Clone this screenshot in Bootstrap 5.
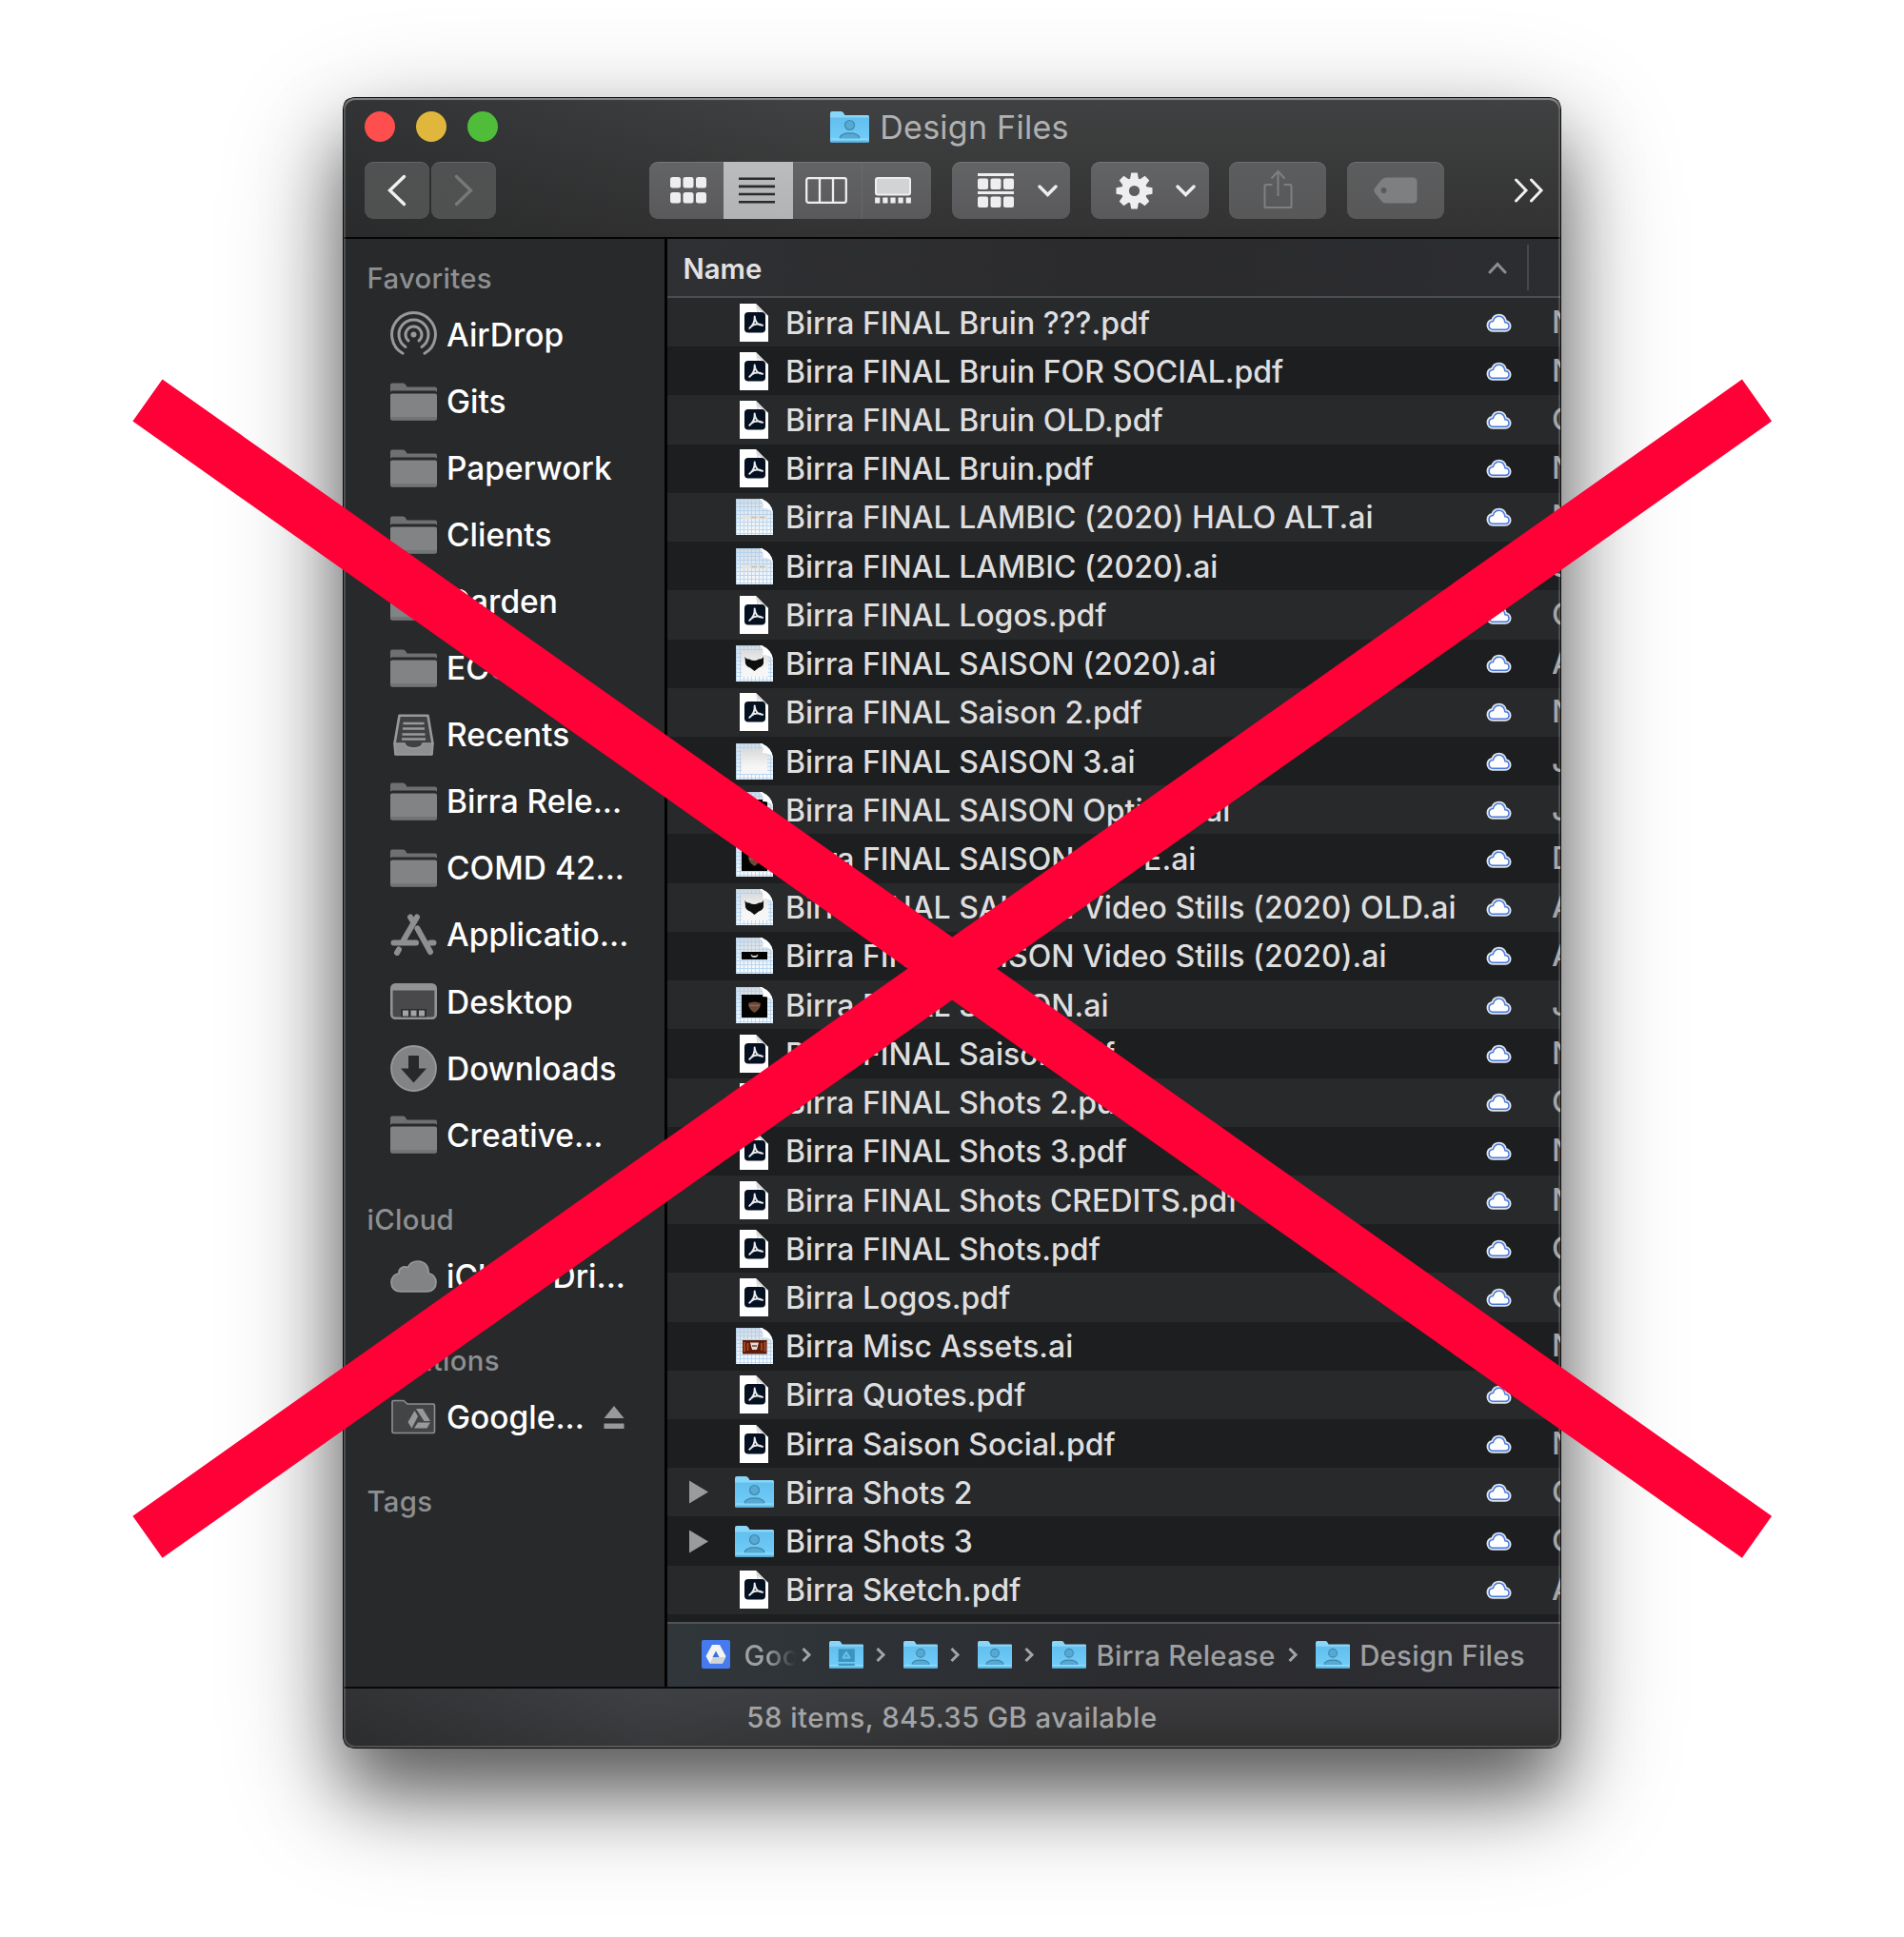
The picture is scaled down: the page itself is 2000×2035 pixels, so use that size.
<!DOCTYPE html>
<html lang="en">
<head>
<meta charset="utf-8">
<meta name="viewport" content="width=device-width, initial-scale=1">
<title>Design Files</title>
<link href="https://cdn.jsdelivr.net/npm/bootstrap@5.3.0/dist/css/bootstrap.min.css" rel="stylesheet">
<style>
body{width:2000px;height:2035px;background:#fff;font-family:Inter,"Liberation Sans",sans-serif;line-height:1;overflow:hidden}
svg{display:block;flex:none}
.stage{width:2000px;height:2035px;padding:103px 0 0 361px}
.finder{width:1278px;height:1733px;border-radius:12px;background:#28292b;
  box-shadow:0 0 0 1px #0a0a0a,0 46px 76px rgba(0,0,0,.5),0 40px 130px rgba(0,0,0,.32)}
/* light inner rim of the window */
.rim{inset:0;border-radius:12px;pointer-events:none;box-shadow:inset 0 2px 1px rgba(255,255,255,.27),inset 0 0 0 2px rgba(255,255,255,.17)}
.toolbar{height:148px;border-bottom:2px solid #050505;
  background:linear-gradient(90deg,rgba(30,32,34,.42),rgba(30,32,34,0) 38%),linear-gradient(#404142,#323232)}
.titlerow{display:grid;grid-template-columns:1fr auto 1fr;height:67px;padding:0 27px 7px 22px}
.light{width:32px;height:32px;border-radius:50%}
.wintitle{font-size:34px;letter-spacing:.25px;color:#b0b1b2;gap:11px}
.wintitle span,.sectlabel span,.place span,.pathbar span{padding-top:1px}
.toolrow{padding-left:22px;height:60px}
.tool{height:60px;border-radius:9px;background:linear-gradient(#636465,#59595b);box-shadow:inset 0 1px 0 rgba(255,255,255,.12);color:#eeeef0}
.tool.dim{background:linear-gradient(#5c5d5e,#585859);color:#7e7f81}
.tool.nav1{background:linear-gradient(#505152,#4f5150);width:67.5px}
.seg{height:60px}
.seg.on{background:linear-gradient(#bbbcbe,#b2b3b5);color:#2a2b2d}
.sidebar{width:337px;background:#28292b;padding-top:16px}
.split{width:3px;background:#020202}
.sectlabel{height:50px;padding-left:24.5px;font-size:29.3px;letter-spacing:.3px;font-weight:500;color:#8e8f91}
.gapabove{margin-top:28px}
.place{height:70.08px;padding-left:49px;gap:10px;font-size:33.5px;font-weight:500;color:#fff;white-space:nowrap}
.place svg{margin-top:-1px}
.colhead{height:62px;padding-left:16.5px;border-bottom:2px solid #4c4d50;font-size:29.3px;font-weight:600;color:#e2e2e3;
  background:linear-gradient(90deg,#2f3033,#2b2b2d 50%,#2c2d31)}
.coldiv{width:2px;height:48px;background:#47484a;margin-left:21px}
.filelist{height:1391px;background:#1d1e20;overflow:hidden}
.filerow{height:51.22px;padding-left:23px;font-size:32px;font-weight:450;letter-spacing:.02px;color:#dededf;white-space:nowrap;overflow:hidden}
.filerow:nth-child(odd){background:#28292b}
.disc{width:20px;margin-right:17px}
.thumb{width:62px}
.fname{margin-left:2px;padding-top:2px}
.cloudcol{margin-left:auto;margin-right:42px}
.datecol{width:9px;overflow:hidden;color:#a5a5a6;font-size:32px;line-height:48px;letter-spacing:0}
.pathbar{height:68px;border-top:2px solid #505255;padding-left:36px;font-size:29.3px;letter-spacing:.3px;color:#9fa0a2;white-space:nowrap;font-weight:450;
  background:linear-gradient(90deg,#30373b,#2b2c30 50%,#2d2d32)}
.pathbar>svg{margin-top:-2px}
.fadeword{width:54px;overflow:hidden;line-height:36px;-webkit-mask-image:linear-gradient(90deg,#000 45%,transparent);mask-image:linear-gradient(90deg,#000 45%,transparent)}
.crumb{margin:0 18px 0 12px}
.statusbar{height:64px;border-top:2px solid #080808;font-size:29.3px;font-weight:450;letter-spacing:.5px;color:#a3a4a5;
  background:linear-gradient(90deg,rgba(40,41,43,.5),rgba(66,72,76,.35) 25%,rgba(50,50,52,0) 55%),linear-gradient(#3c3c3f,#303031)}
.cross{left:0;top:0}
</style>
<script src="https://cdn.jsdelivr.net/npm/bootstrap@5.3.0/dist/js/bootstrap.bundle.min.js"></script>
</head>
<body>
<svg width="0" height="0" class="position-absolute">
  <defs>
    <linearGradient id="blueG" x1="0" y1="0" x2="0" y2="1"><stop offset="0" stop-color="#62bfee"/><stop offset="1" stop-color="#72cdf8"/></linearGradient>
    <linearGradient id="paperG" x1="0" y1="0" x2="0" y2="1"><stop offset="0" stop-color="#dcdcdc"/><stop offset=".7" stop-color="#f6f6f6"/></linearGradient>
    <linearGradient id="gridG" x1="0" y1="0" x2="0" y2="1"><stop offset="0" stop-color="#d3dce4"/><stop offset="1" stop-color="#fbfdff"/></linearGradient>
    <pattern id="gridP" width="4" height="4" patternUnits="userSpaceOnUse"><path d="M0 .5H4M.5 0V4" stroke="#a9cdec" stroke-width="1" opacity=".75"/></pattern>
    <symbol id="bluefolder" viewBox="0 0 41 33">
      <path d="M0 2Q0 0 2 0H11.5Q13 0 14 1.500L15.500 4H39.500Q41 4 41 5.500V31Q41 32.500 39.500 32.500H1.500Q0 32.500 0 31Z" fill="#8ad6f8"/>
      <path d="M0 6.500H41V31Q41 32.500 39.500 32.500H1.500Q0 32.500 0 31Z" fill="url(#blueG)"/>
      <path d="M1 29H40" stroke="#9be0fb" stroke-width="1"/><path d="M.5 32H40.500" stroke="#4b9cc7" stroke-width="1"/>
    </symbol>
    <symbol id="userfolder" viewBox="0 0 41 33">
      <use href="#bluefolder" width="41" height="33"/>
      <circle cx="20.500" cy="14.500" r="5" fill="#56a9d3" stroke="#4187ac" stroke-width="1.200"/>
      <path d="M10 28.500C10 24.500 15 22.700 20.500 22.700S31 24.500 31 28.500Z" fill="#56a9d3"/><path d="M10 28C11 24 15.500 22.900 20.500 22.900S30 24 31 28" fill="none" stroke="#4187ac" stroke-width="1.200"/>
    </symbol>
    <symbol id="drivefolder" viewBox="0 0 41 33">
      <use href="#bluefolder" width="41" height="33"/>
      <path d="M11 9.500H30.500V25H11Z" fill="#3b93c0"/><path d="M11 27H30.500V29.500H11Z" fill="#3b93c0"/>
      <path d="M20.500 13.500L16.500 20H24.500Z" fill="none" stroke="#66bfe6" stroke-width="2.400" stroke-linejoin="round"/>
    </symbol>
    <symbol id="grayfolder" viewBox="0 0 49 40">
      <path d="M0 9V2.500Q0 .5 2 .5H13.500Q15 .5 16 2L17.500 4.500H47Q49 4.500 49 6.500V10Q48.500 8.500 47 8.500H2Q.5 8.500 0 10Z" fill="#6f7072"/>
      <path d="M0 13Q0 11.500 2 11.500H47Q49 11.500 49 13.500V37Q49 39.500 47 39.500H2Q0 39.500 0 37Z" fill="#828385"/>
      <path d="M0 36H49V37Q49 39.500 47 39.500H2Q0 39.500 0 37Z" fill="#737476"/>
    </symbol>
    <symbol id="pdf" viewBox="0 0 30 40">
      <path d="M0 0H17L30 13V40H0Z" fill="#fff"/>
      <path d="M17 0L30 13L18.500 9Z" fill="#d9d9d9"/><path d="M18.500 6L30 13L24 14Z" fill="#fff"/>
      <rect x="5" y="9" width="22" height="21.500" rx="4" fill="#051120"/>
      <path d="M15.700 13.500C16 18 14.500 22.500 10.300 25.800M15.700 14C16.200 19 19 22.500 24 22.800M12 24C15 21.500 19.500 20.900 24 22.800" fill="none" stroke="#e7e9ec" stroke-width="2" stroke-linecap="round"/>
    </symbol>
    <symbol id="aipage" viewBox="0 0 39 38">
      <path d="M0 0H27Q38 5 39 15V38H0Z" fill="url(#gridG)"/><path d="M0 0H27Q38 5 39 15V38H0Z" fill="url(#gridP)"/>
    </symbol>
    <symbol id="aicurl" viewBox="0 0 39 38"><path d="M25 0Q30 4 28 10Q36 10 39 15Q38 5 27 0Z" fill="#fff"/></symbol>
    <symbol id="ai-lambic" viewBox="0 0 39 38"><use href="#aipage" width="39" height="38"/>
      <path d="M6 19.500H33" stroke="#e4e4df" stroke-width="3.500"/><path d="M16 19.500H31" stroke="#bdbdb9" stroke-width="1.500" stroke-dasharray="6 2.500"/><use href="#aicurl" width="39" height="38"/></symbol>
    <symbol id="ai-beard" viewBox="0 0 39 38"><use href="#aipage" width="39" height="38"/>
      <rect x="6" y="5" width="28" height="28" fill="url(#paperG)"/>
      <path d="M9.500 12Q11 15 14 14.500Q19.500 17.500 24 14.500Q27.500 15 29 12V19Q28 22 24 23.500L19.500 27L15 23.500Q11 22 10 19Z" fill="#0d0e10"/><use href="#aicurl" width="39" height="38"/></symbol>
    <symbol id="ai-blank" viewBox="0 0 39 38"><use href="#aipage" width="39" height="38"/>
      <rect x="6" y="7" width="27" height="25" fill="url(#paperG)"/><use href="#aicurl" width="39" height="38"/></symbol>
    <symbol id="ai-dark" viewBox="0 0 39 38"><use href="#aipage" width="39" height="38"/>
      <rect x="6" y="8" width="27" height="24" fill="#020202"/><path d="M13 17Q19.500 14 26 17Q26 23 19.500 27Q13 23 13 17Z" fill="#6a4a36"/><path d="M14 19.500H25" stroke="#8a6a54" stroke-width="1.500"/><use href="#aicurl" width="39" height="38"/></symbol>
    <symbol id="ai-strip" viewBox="0 0 39 38"><use href="#aipage" width="39" height="38"/>
      <rect x="6" y="15" width="27" height="8" fill="#030303"/><path d="M15.500 17.500L18 19H21L23.500 17.500Q23 21 19.500 21Q16 21 15.500 17.500Z" fill="#d5d5d5"/><use href="#aicurl" width="39" height="38"/></symbol>
    <symbol id="ai-misc" viewBox="0 0 39 38"><use href="#aipage" width="39" height="38"/>
      <rect x="7" y="13" width="25.500" height="14.500" fill="#5b1c0c"/><path d="M9 15V25M12.500 16V24M27 16V24M30.500 15V25" stroke="#b04a22" stroke-width="1.800"/><path d="M15 15.500H24L22 23H17Z" fill="#e3ddd9"/><path d="M17 19H22" stroke="#6c2a1b" stroke-width="1.300"/><use href="#aicurl" width="39" height="38"/></symbol>
    <symbol id="cloud" viewBox="0 0 27 20">
      <path d="M7 18.200H20.200C23.300 18.200 25 16 25 13.500C25 11 23.200 9 20.600 8.800C19.800 4.500 17 2.200 13.500 2.200C10.300 2.200 7.800 4 6.700 7.500C3.800 8 2 10 2 12.800C2 16 4.200 18.200 7 18.200Z" fill="#fff" stroke="#dfe4ec" stroke-width="3"/>
      <path d="M7 17.200H20.200C22.600 17.200 24 15.500 24 13.500C24 11.400 22.500 9.800 19.900 9.700C19.200 5.300 16.700 3.300 13.500 3.300C10.500 3.300 8.300 5.200 7.500 8.400C4.600 8.700 3.100 10.400 3.100 12.800C3.100 15.500 4.900 17.200 7 17.200Z" fill="#fff" stroke="#4679dd" stroke-width="1.500"/>
    </symbol>
    <symbol id="chev" viewBox="0 0 12 17"><path d="M2.500 2L9 8.500L2.500 15" fill="none" stroke="#a3a4a6" stroke-width="3"/></symbol>
  </defs>
</svg>

<div class="stage position-relative">
  <main class="finder d-flex flex-column position-relative overflow-visible">
    <div class="rounded-3 overflow-hidden d-flex flex-column h-100">
    <header class="toolbar">
      <div class="titlerow align-items-center">
        <div class="d-flex" style="gap:22px">
          <span class="light" style="background:#fe4e4d"></span><span class="light" style="background:#e0b73c"></span><span class="light" style="background:#4fbc3a"></span>
        </div>
        <div class="wintitle d-flex align-items-center"><svg width="41" height="33"><use href="#userfolder"/></svg><span>Design Files</span></div>
        <span></span>
      </div>
      <div class="toolrow d-flex">
        <div class="tool nav1 d-flex align-items-center justify-content-center"><svg width="22" height="34" viewBox="0 0 22 34"><path d="M18.500 2.500L3.500 17L18.500 31.500" fill="none" stroke="#f0f0f0" stroke-width="3.400" stroke-linecap="round"/></svg></div>
        <div class="tool nav1 d-flex align-items-center justify-content-center" style="margin-left:2.500px"><svg width="22" height="34" viewBox="0 0 22 34"><path d="M3.500 2.500L18.500 17L3.500 31.500" fill="none" stroke="#777879" stroke-width="3.400" stroke-linecap="round"/></svg></div>
        <div class="tool d-flex overflow-hidden" style="margin-left:161.500px;width:296px">
          <div class="seg d-flex align-items-center justify-content-center" style="width:78px;padding-left:3px"><svg width="38" height="28" viewBox="0 0 38 28" fill="currentColor"><rect width="11" height="11.500" rx="2.500"/><rect x="13.500" width="11" height="11.500" rx="2.500"/><rect x="27" width="11" height="11.500" rx="2.500"/><rect y="16" width="11" height="11.500" rx="2.500"/><rect x="13.500" y="16" width="11" height="11.500" rx="2.500"/><rect x="27" y="16" width="11" height="11.500" rx="2.500"/></svg></div>
          <div class="seg on d-flex align-items-center justify-content-center" style="width:72.500px;padding-right:2px"><svg width="38" height="28" viewBox="0 0 38 28"><path d="M0 1.800H38M0 9.900H38M0 18H38M0 26.200H38" stroke="currentColor" stroke-width="2.600"/></svg></div>
          <div class="seg d-flex align-items-center justify-content-center" style="width:72px;padding-right:1px"><svg width="44" height="28" viewBox="0 0 44 28"><g fill="none" stroke="currentColor" stroke-width="2.300"><rect x="1.200" y="1.200" width="41.600" height="25.600" rx="2"/><path d="M15 1V27M29 1V27"/></g></svg></div>
          <div class="seg d-flex align-items-center justify-content-center border-start border-secondary" style="width:73.500px;padding-right:8px;--bs-border-opacity:.5"><svg width="38" height="28" viewBox="0 0 38 28"><rect x="1" y="1" width="36" height="17.500" rx="2" fill="#d2d3d5" stroke="currentColor" stroke-width="2"/><path d="M2.700 21.500V27.500M10.900 21.500V27.500M19 21.500V27.500M27.100 21.500V27.500M35.300 21.500V27.500" stroke="currentColor" stroke-width="5.200"/></svg></div>
        </div>
        <div class="tool d-flex align-items-center" style="margin-left:22px;width:123.500px;padding-left:26.500px;gap:25px">
          <svg width="38" height="36" viewBox="0 0 38 36" fill="currentColor"><path d="M0 0H38V3H0ZM0 19H38V22H0Z"/><rect y="5.500" width="11" height="11.500" rx="2"/><rect x="13.500" y="5.500" width="11" height="11.500" rx="2"/><rect x="27" y="5.500" width="11" height="11.500" rx="2"/><rect y="24.500" width="11" height="11.500" rx="2"/><rect x="13.500" y="24.500" width="11" height="11.500" rx="2"/><rect x="27" y="24.500" width="11" height="11.500" rx="2"/></svg>
          <svg width="21" height="13" viewBox="0 0 21 13"><path d="M2 2L10.500 10.500L19 2" fill="none" stroke="currentColor" stroke-width="3.400" stroke-linecap="round"/></svg>
        </div>
        <div class="tool d-flex align-items-center" style="margin-left:22px;width:124px;padding-left:26px;gap:24.500px">
          <svg width="39" height="39" viewBox="-19.500 -19.500 39 39"><g fill="currentColor"><path fill-rule="evenodd" d="M0-13.500A13.500 13.500 0 1 1 0 13.500A13.500 13.500 0 1 1 0-13.500ZM0-5.600A5.600 5.600 0 1 0 0 5.600A5.600 5.600 0 1 0 0-5.600Z"/><g id="teeth"><path id="tooth" d="M-4.500-12L-3.300-19H3.300L4.500-12Z"/><use href="#tooth" transform="rotate(45)"/><use href="#tooth" transform="rotate(90)"/><use href="#tooth" transform="rotate(135)"/></g><use href="#teeth" transform="rotate(180)"/></g></svg>
          <svg width="21" height="13" viewBox="0 0 21 13"><path d="M2 2L10.500 10.500L19 2" fill="none" stroke="currentColor" stroke-width="3.400" stroke-linecap="round"/></svg>
        </div>
        <div class="tool dim d-flex justify-content-center" style="margin-left:21.500px;width:102px;padding-top:8px"><svg width="31" height="42" viewBox="0 0 31 42"><path d="M9.500 16H3Q1.500 16 1.500 17.500V38.500Q1.500 40 3 40H28Q29.500 40 29.500 38.500V17.500Q29.500 16 28 16H21.500M15.500 28V3M8.500 9.500L15.500 2L22.500 9.500" fill="none" stroke="currentColor" stroke-width="2.100"/></svg></div>
        <div class="tool dim d-flex align-items-center justify-content-center" style="margin-left:21.500px;width:102.500px"><svg width="46" height="28" viewBox="0 0 46 28"><path fill="currentColor" fill-rule="evenodd" d="M13 .5H41Q45.500 .5 45.500 5V23Q45.500 27.500 41 27.500H13Q10 27.500 8 25L1.500 17Q-.8 14 1.500 11L8 3Q10 .5 13 .5ZM10.500 11A3 3 0 1 0 10.500 17A3 3 0 1 0 10.500 11Z"/></svg></div>
        <svg class="align-self-center" style="margin-left:73px" width="32" height="26" viewBox="0 0 32 26"><path d="M2.500 2L13 13L2.500 24M18.500 2L29 13L18.500 24" fill="none" stroke="#f0f0f0" stroke-width="3" stroke-linecap="round"/></svg>
      </div>
    </header>

    <div class="d-flex flex-grow-1">
      <aside class="sidebar flex-shrink-0">
        <div class="sectlabel d-flex align-items-center"><span>Favorites</span></div>
        <div class="place d-flex align-items-center"><svg width="49" height="49" viewBox="-24.500 -24.500 49 49"><g fill="none" stroke="#98999b" stroke-width="3" stroke-linecap="round"><circle r="3" fill="#98999b" stroke="none"/><path d="M-5.500 6.500A8.500 8.500 0 1 1 5.500 6.500"/><path d="M-8.500 13A15.500 15.500 0 1 1 8.500 13"/><path d="M-11.500 19.800A22.900 22.900 0 1 1 11.500 19.800"/></g></svg><span>AirDrop</span></div>
        <div class="place d-flex align-items-center"><svg width="49" height="40"><use href="#grayfolder"/></svg><span>Gits</span></div>
        <div class="place d-flex align-items-center"><svg width="49" height="40"><use href="#grayfolder"/></svg><span>Paperwork</span></div>
        <div class="place d-flex align-items-center"><svg width="49" height="40"><use href="#grayfolder"/></svg><span>Clients</span></div>
        <div class="place d-flex align-items-center"><svg width="49" height="40"><use href="#grayfolder"/></svg><span>Garden</span></div>
        <div class="place d-flex align-items-center"><svg width="49" height="40"><use href="#grayfolder"/></svg><span>ECO</span></div>
        <div class="place d-flex align-items-center"><svg width="49" height="44" viewBox="0 0 49 44"><path d="M9.500 1.800H39.500L44.500 31L43.500 42.500H5.500L4.500 31Z" fill="#404143" stroke="#98999b" stroke-width="2.600" stroke-linejoin="round"/><path d="M4.500 31H15Q16 36 24.500 36T34 31H44.500L43.500 42.500H5.500Z" fill="#8e8f91" stroke="#98999b" stroke-width="1.500"/><path d="M13.500 10H35.500M13 15.500H36M12.500 21.500H36.500M12 26.500H37" stroke="#98999b" stroke-width="2.400"/></svg><span>Recents</span></div>
        <div class="place d-flex align-items-center"><svg width="49" height="40"><use href="#grayfolder"/></svg><span>Birra Rele...</span></div>
        <div class="place d-flex align-items-center"><svg width="49" height="40"><use href="#grayfolder"/></svg><span>COMD 42...</span></div>
        <div class="place d-flex align-items-center"><svg width="49" height="44" viewBox="0 0 49 44"><g fill="none" stroke="#8e8f91" stroke-width="6" stroke-linecap="round"><path d="M3.500 30.500H27M42 30.500H45.500M28 3.500L13.500 28.500M9 37.500L7 41"/><path d="M21 3.500L24 8.500M28.500 15.500L42 40"/></g></svg><span>Applicatio...</span></div>
        <div class="place d-flex align-items-center"><svg width="49" height="38" viewBox="0 0 49 38"><rect x="1.300" y="1.300" width="46.400" height="35.400" rx="4" fill="#49494b" stroke="#929395" stroke-width="2.600"/><path d="M1.300 7.500V5Q1.300 1.300 5 1.300H44Q47.700 1.300 47.700 5V7.500Z" fill="#929395"/><path d="M11 27H38V35.500H11Z" fill="#2c2d2e"/><path d="M13 28.500H19V34.500H13ZM21.500 28.500H27.500V34.500H21.500ZM30 28.500H36V34.500H30Z" fill="#a2a3a5"/></svg><span>Desktop</span></div>
        <div class="place d-flex align-items-center"><svg width="49" height="49" viewBox="0 0 49 49"><circle cx="24.500" cy="24.500" r="23.500" fill="#828385" stroke="#98999b" stroke-width="1.800"/><path d="M19 11H30V24.500H38L24.500 39.500L11 24.500H19Z" fill="#28292b"/></svg><span>Downloads</span></div>
        <div class="place d-flex align-items-center"><svg width="49" height="40"><use href="#grayfolder"/></svg><span>Creative...</span></div>

        <div class="sectlabel gapabove d-flex align-items-center"><span>iCloud</span></div>
        <div class="place d-flex align-items-center"><svg width="49" height="34" viewBox="0 0 49 34"><path d="M10.500 33H38.500C44 33 48 29 48 23.500C48 18 44.500 14.500 40 13.500C40.500 6 35.500 1 29 1C23.500 1 20 3.800 18.500 7.500C13.500 5.500 8.500 8.500 9 13.800C4 14.500 1 18.500 1 23.500C1 29 5 33 10.500 33Z" fill="#828385" stroke="#98999b" stroke-width="1.700"/></svg><span>iCloud Dri...</span></div>

        <div class="sectlabel gapabove d-flex align-items-center"><span>Locations</span></div>
        <div class="place d-flex align-items-center"><svg width="49" height="37" viewBox="0 0 49 37"><path d="M2 3Q2 1.500 3.500 1.500H14L18 5H45Q46.500 5 46.500 6.500V34Q46.500 35.500 45 35.500H3.500Q2 35.500 2 34Z" fill="#434446" stroke="#8e8f91" stroke-width="1.600"/><path d="M27 10H34L42 23H35.500ZM25.500 12L29 18L22.500 30.500L18.500 24ZM29 24.500H42L38.500 30.500H25Z" fill="#98999b"/></svg><span>Google...</span><svg style="margin-left:10px" width="22" height="24" viewBox="0 0 22 24"><path d="M11 0L21.500 13H.5ZM.5 18.500H21.500V24H.5Z" fill="#98999b"/></svg></div>

        <div class="sectlabel gapabove d-flex align-items-center"><span>Tags</span></div>
      </aside>
      <div class="split flex-shrink-0"></div>
      <section class="flex-grow-1 d-flex flex-column overflow-hidden">
        <div class="colhead d-flex align-items-center"><span class="pt-1">Name</span>
          <svg class="ms-auto" width="20" height="13" viewBox="0 0 20 13"><path d="M2 11L10 2.500L18 11" fill="none" stroke="#8c8d8f" stroke-width="3" stroke-linecap="round"/></svg>
          <span class="coldiv"></span><span style="width:33px"></span></div>
        <div class="filelist" id="files"></div>
        <div class="pathbar d-flex align-items-center">
          <svg width="30" height="30" viewBox="0 0 30 30"><rect width="30" height="30" rx="2" fill="#457bee"/><path d="M11 5H19L25.500 17L22 24.500H8.500L4.500 17Z" fill="#f4f4f4"/><path d="M8.500 24.500L12 18H25.200L22 24.500Z" fill="#d2d4d6"/><path d="M15 11.500L18.500 18H11.500Z" fill="#3d6fdc"/></svg>
          <span class="fadeword" style="margin-left:14.500px">Google</span>
          <svg class="crumb" style="margin-left:5.500px" width="12" height="17"><use href="#chev"/></svg>
          <svg width="36" height="29"><use href="#drivefolder"/></svg>
          <svg class="crumb" width="12" height="17"><use href="#chev"/></svg>
          <svg width="36" height="29"><use href="#userfolder"/></svg>
          <svg class="crumb" width="12" height="17"><use href="#chev"/></svg>
          <svg width="36" height="29"><use href="#userfolder"/></svg>
          <svg class="crumb" width="12" height="17"><use href="#chev"/></svg>
          <svg width="36" height="29"><use href="#userfolder"/></svg>
          <span style="margin-left:10.500px">Birra Release</span>
          <svg class="crumb" width="12" height="17"><use href="#chev"/></svg>
          <svg width="36" height="29"><use href="#userfolder"/></svg>
          <span style="margin-left:10.500px">Design Files</span>
        </div>
      </section>
    </div>
    <footer class="statusbar d-flex align-items-center justify-content-center">58 items, 845.35 GB available</footer>
    </div>
    <div class="rim position-absolute"></div>
  </main>
  <svg class="cross position-absolute" width="2000" height="2035" viewBox="0 0 2000 2035"><path d="M155 420.500L1845.500 1614.700M1845.500 420.500L155 1614.700" stroke="#ff0037" stroke-width="54"/></svg>
</div>
<script>
// [name, icon, first letter of the date column]
const files = [
  ["Birra FINAL Bruin ???.pdf","pdf","N"],
  ["Birra FINAL Bruin FOR SOCIAL.pdf","pdf","N"],
  ["Birra FINAL Bruin OLD.pdf","pdf","O"],
  ["Birra FINAL Bruin.pdf","pdf","N"],
  ["Birra FINAL LAMBIC (2020) HALO ALT.ai","ai-lambic","N"],
  ["Birra FINAL LAMBIC (2020).ai","ai-lambic","J"],
  ["Birra FINAL Logos.pdf","pdf","O"],
  ["Birra FINAL SAISON (2020).ai","ai-beard","A"],
  ["Birra FINAL Saison 2.pdf","pdf","N"],
  ["Birra FINAL SAISON 3.ai","ai-blank","J"],
  ["Birra FINAL SAISON Options.ai","ai-dark","J"],
  ["Birra FINAL SAISON WIDE.ai","ai-dark","D"],
  ["Birra FINAL SAISON Video Stills (2020) OLD.ai","ai-beard","A"],
  ["Birra FINAL SAISON Video Stills (2020).ai","ai-strip","A"],
  ["Birra FINAL SAISON.ai","ai-dark","J"],
  ["Birra FINAL Saison.pdf","pdf","N"],
  ["Birra FINAL Shots 2.pdf","pdf","O"],
  ["Birra FINAL Shots 3.pdf","pdf","N"],
  ["Birra FINAL Shots CREDITS.pdf","pdf","N"],
  ["Birra FINAL Shots.pdf","pdf","O"],
  ["Birra Logos.pdf","pdf","O"],
  ["Birra Misc Assets.ai","ai-misc","N"],
  ["Birra Quotes.pdf","pdf","N"],
  ["Birra Saison Social.pdf","pdf","N"],
  ["Birra Shots 2","userfolder","O"],
  ["Birra Shots 3","userfolder","O"],
  ["Birra Sketch.pdf","pdf","A"]
];
const size = i => i === "pdf" ? [30,40] : i === "userfolder" ? [41,33] : [39,38];
document.getElementById("files").innerHTML = files.map(([name, icon, month]) => {
  const [w, h] = size(icon);
  const disc = icon === "userfolder" ? '<svg width="20" height="25" viewBox="0 0 20 25"><path d="M0 .5L20 12.500L0 24.500Z" fill="#9a9b9c"/></svg>' : "";
  return `<div class="filerow d-flex align-items-center"><span class="disc">${disc}</span><span class="thumb d-flex justify-content-center"><svg width="${w}" height="${h}"><use href="#${icon}"/></svg></span><span class="fname">${name}</span><svg class="cloudcol" width="27" height="20"><use href="#cloud"/></svg><span class="datecol">${month}</span></div>`;
}).join("");
</script>
</body>
</html>
